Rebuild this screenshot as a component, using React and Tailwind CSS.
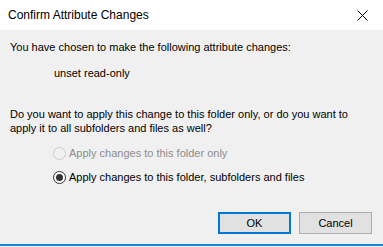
export default function App() {
  const font = { fontFamily: '"Segoe UI", "Liberation Sans", Arial, sans-serif' };
  return (
    <div className="w-[383px] h-[247px] overflow-hidden bg-[#f0f0f0] flex flex-col text-[11px] text-black" style={font}>
      <div className="h-[30px] bg-white flex items-center justify-between pl-[8px] pr-[12px] shrink-0">
        <span className="text-[12px] text-black">Confirm Attribute Changes</span>
        <svg width="11" height="11" viewBox="0 0 11 11" className="mr-[3px]">
          <path d="M0.5 0.5 L10.5 10.5 M10.5 0.5 L0.5 10.5" stroke="#000" strokeWidth="1" />
        </svg>
      </div>
      <div className="flex-1 flex flex-col pl-[10px] pr-[6px] pt-[10px] whitespace-nowrap">
        <div className="leading-[15px]">You have chosen to make the following attribute changes:</div>
        <div className="leading-[15px] pl-[44px] mt-[11px]">unset read-only</div>
        <div className="leading-[14px] mt-[26px]">
          Do you want to apply this change to this folder only, or do you want to
          <br />
          apply it to all subfolders and files as well?
        </div>
        <div className="flex flex-col gap-[9px] pl-[43px] mt-[11px]">
          <div className="flex items-center gap-[3px] h-[15px] text-[#8c8c8c]">
            <span className="w-[13px] h-[13px] rounded-full border border-[#cccccc] bg-[#f0f0f0] shrink-0" />
            <span>Apply changes to this folder only</span>
          </div>
          <div className="flex items-center gap-[3px] h-[15px]">
            <span className="w-[13px] h-[13px] rounded-full border border-[#333333] bg-white flex items-center justify-center shrink-0">
              <span className="w-[7px] h-[7px] rounded-full bg-[#333333]" />
            </span>
            <span>Apply changes to this folder, subfolders and files</span>
          </div>
        </div>
        <div className="flex justify-end gap-[8px] mt-[27px] pr-[5px]">
          <button className="w-[73px] h-[22px] border-2 border-[#0078d7] bg-[#e1e1e1] text-[11px] flex items-center justify-center" style={font}>
            OK
          </button>
          <button className="w-[73px] h-[22px] border border-[#adadad] bg-[#e1e1e1] text-[11px] flex items-center justify-center" style={font}>
            Cancel
          </button>
        </div>
      </div>
      <div className="h-[2px] bg-[#1883d7] shrink-0" />
      <div className="h-[1px] bg-[#f0f0f0] shrink-0" />
    </div>
  );
}
